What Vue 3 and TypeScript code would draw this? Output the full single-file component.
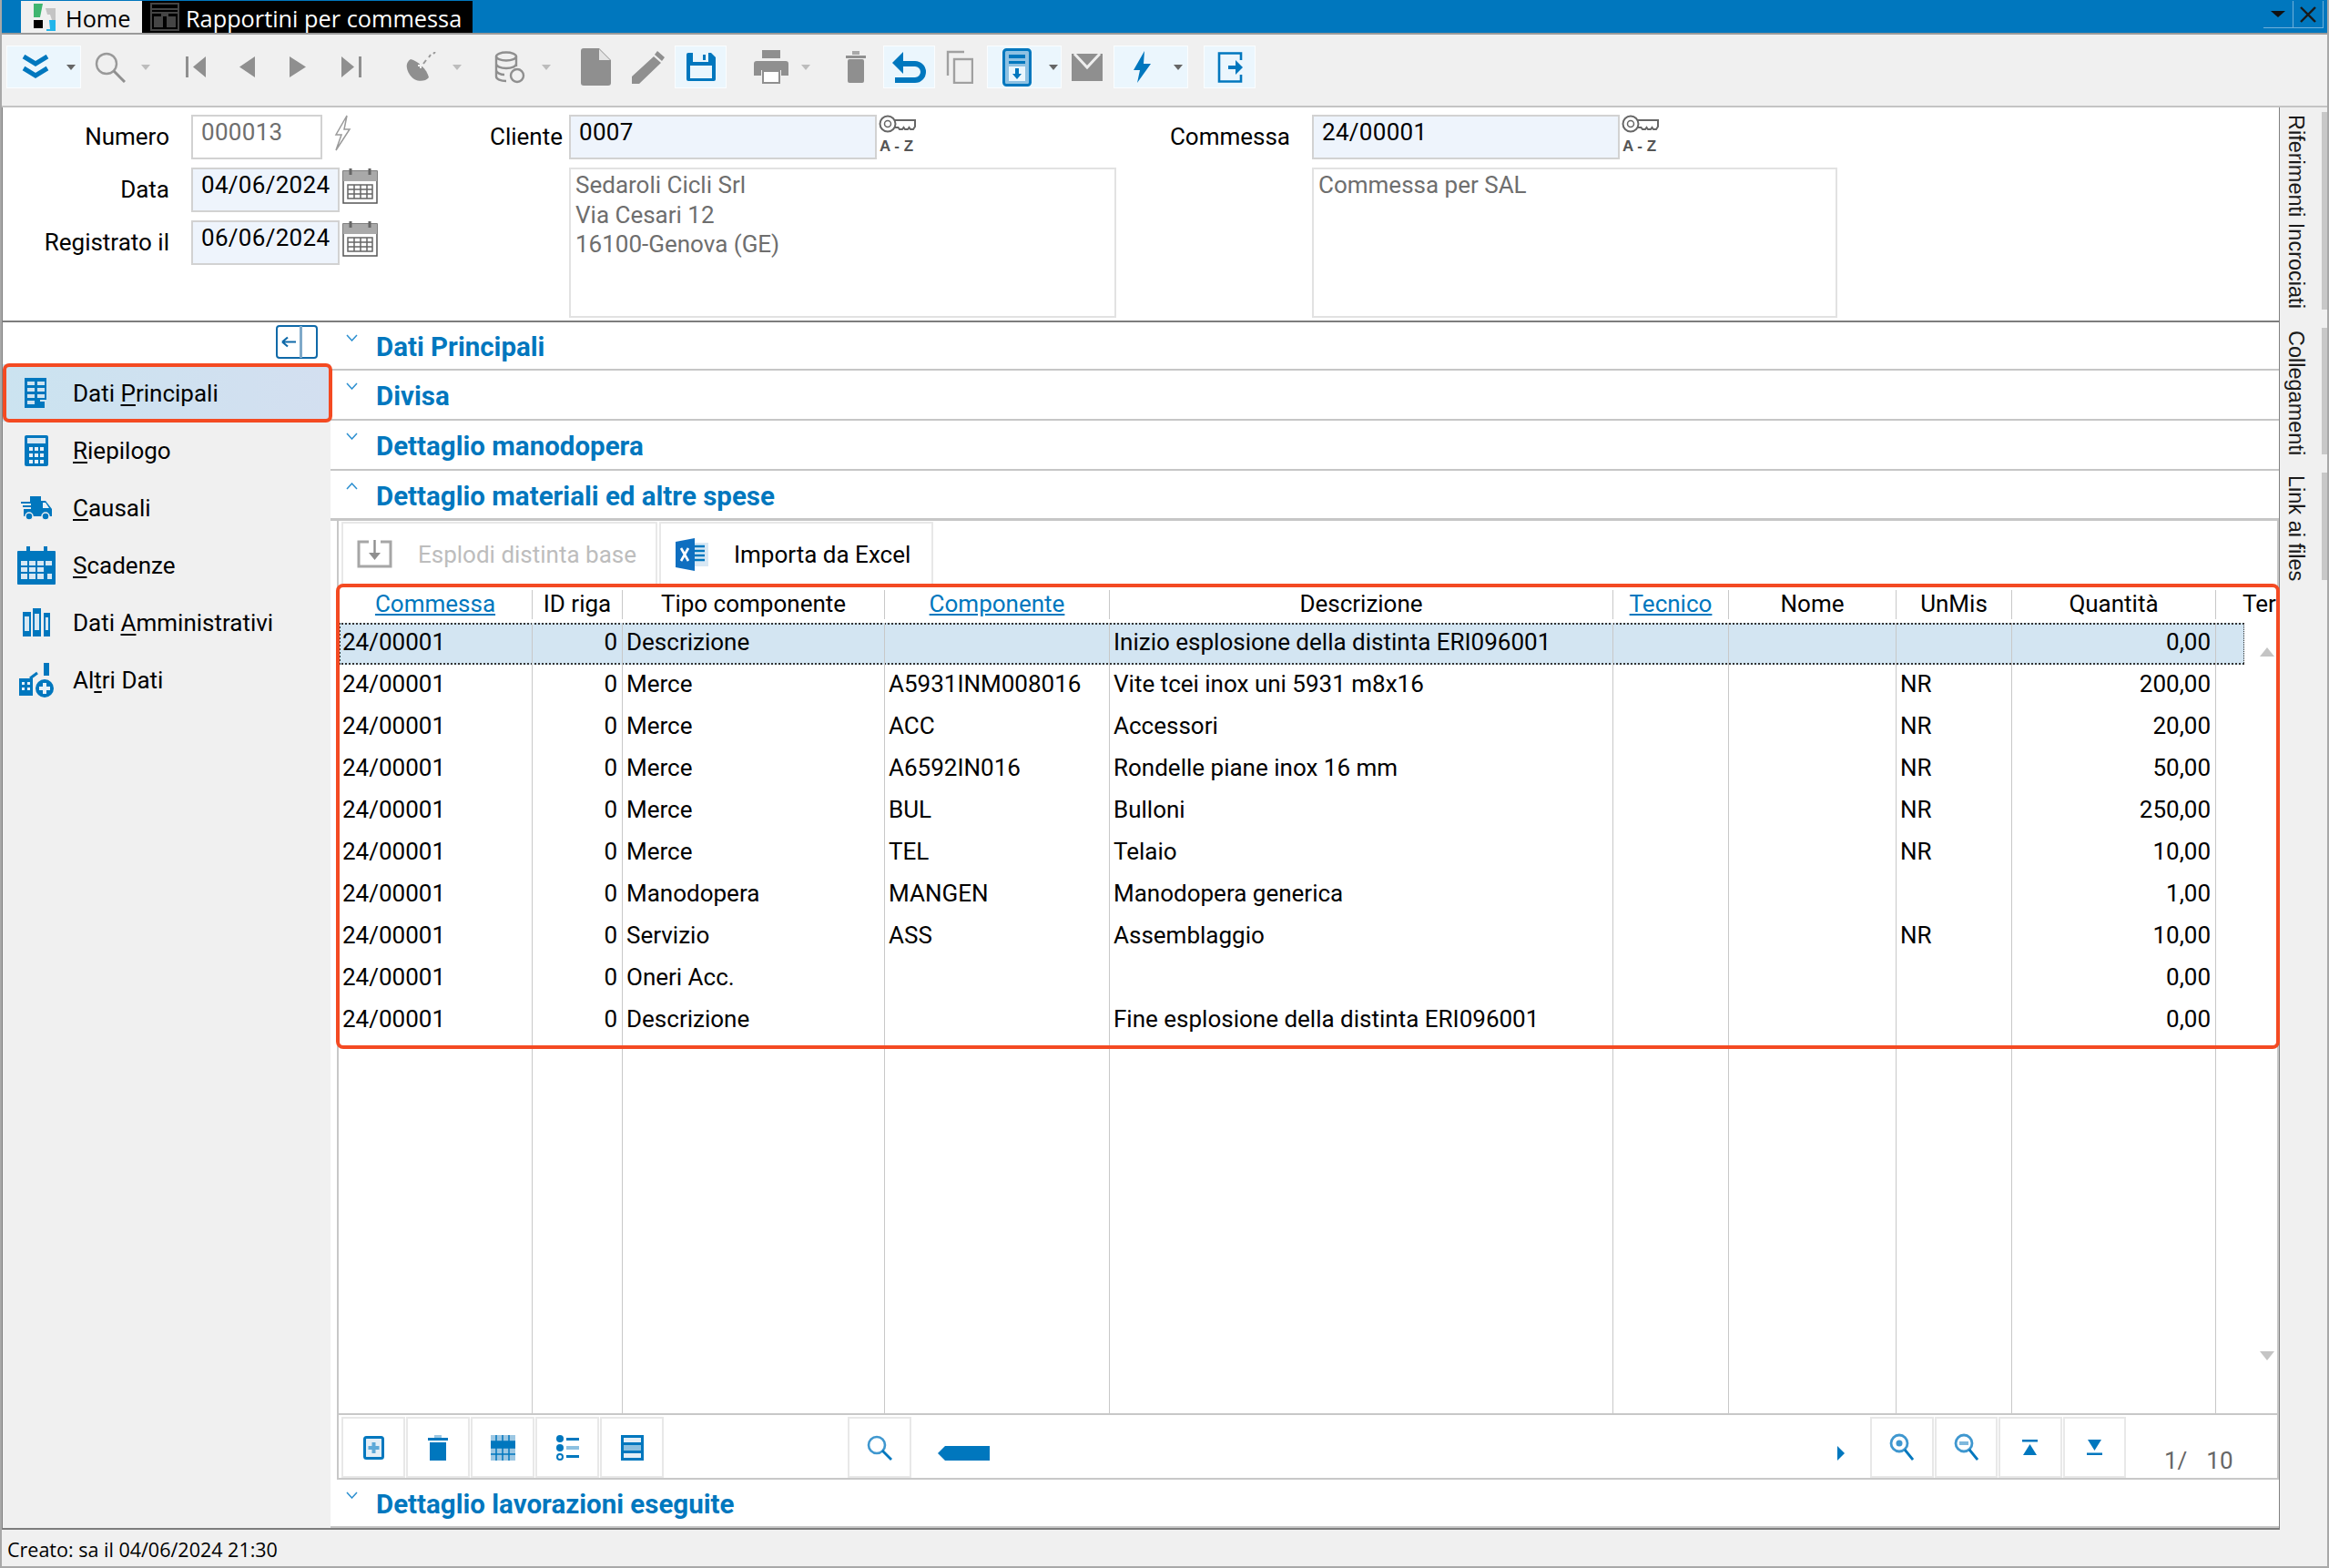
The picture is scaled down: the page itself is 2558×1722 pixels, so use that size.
<script setup lang="ts">
interface GridRow {
  commessa: string
  tipo: string
  comp: string
  desc: string
  um: string
  qty: string
}

const rows: GridRow[] = [
  { commessa: '24/00001', tipo: 'Descrizione', comp: '', desc: 'Inizio esplosione della distinta ERI096001', um: '', qty: '0,00' },
  { commessa: '24/00001', tipo: 'Merce', comp: 'A5931INM008016', desc: 'Vite tcei inox uni 5931 m8x16', um: 'NR', qty: '200,00' },
  { commessa: '24/00001', tipo: 'Merce', comp: 'ACC', desc: 'Accessori', um: 'NR', qty: '20,00' },
  { commessa: '24/00001', tipo: 'Merce', comp: 'A6592IN016', desc: 'Rondelle piane inox 16 mm', um: 'NR', qty: '50,00' },
  { commessa: '24/00001', tipo: 'Merce', comp: 'BUL', desc: 'Bulloni', um: 'NR', qty: '250,00' },
  { commessa: '24/00001', tipo: 'Merce', comp: 'TEL', desc: 'Telaio', um: 'NR', qty: '10,00' },
  { commessa: '24/00001', tipo: 'Manodopera', comp: 'MANGEN', desc: 'Manodopera generica', um: '', qty: '1,00' },
  { commessa: '24/00001', tipo: 'Servizio', comp: 'ASS', desc: 'Assemblaggio', um: 'NR', qty: '10,00' },
  { commessa: '24/00001', tipo: 'Oneri Acc.', comp: '', desc: '', um: '', qty: '0,00' },
  { commessa: '24/00001', tipo: 'Descrizione', comp: '', desc: 'Fine esplosione della distinta ERI096001', um: '', qty: '0,00' }
]

const collapsed = ['Dati Principali', 'Divisa', 'Dettaglio manodopera']
</script>

<template>
  <div class="app">
    <!-- Title bar with the document tabs -->
    <div class="titlebar">
      <div class="tab tab-home">
        <svg width="26" height="31" viewBox="0 0 26 31">
          <path d="M1 1h10l-3 15H1z" fill="#3fb56f" />
          <path d="M14 6h11v13h-4l-2-6h-3z" fill="#c4c4c4" />
          <rect x="1" y="19" width="10" height="9" fill="#000" />
          <path d="M18 19l3 0h4v12H15v-2h4z" fill="#22b5ea" />
        </svg>
        <span>Home</span>
      </div>
      <div class="tab tab-doc">
        <svg width="32" height="31" viewBox="0 0 32 31">
          <rect x="1" y="1" width="30" height="29" fill="none" stroke="#454545" stroke-width="2" />
          <path d="M1 7h30M1 11h30" stroke="#454545" stroke-width="2" />
          <rect x="4" y="15" width="10" height="12" fill="#454545" />
          <rect x="18" y="15" width="10" height="12" fill="#454545" />
          <rect x="12" y="12" width="8" height="3" fill="#454545" />
        </svg>
        <span>Rapportini per commessa</span>
      </div>
      <div class="winbtns">
        <div class="winbtn"><i class="win-caret"></i></div>
        <div class="winbtn">
          <svg width="20" height="18" viewBox="0 0 20 18"><path d="M2 1l16 16M18 1L2 17" stroke="#1a1a1a" stroke-width="2.4" /></svg>
        </div>
      </div>
    </div>

    <!-- Main toolbar -->
    <div class="toolbar">
      <div class="tbtn tbtn-wide">
        <svg width="30" height="27" viewBox="0 0 30 27"><path d="M2 2l13 8 13-8M2 15l13 8 13-8" fill="none" stroke="#0077be" stroke-width="5" /></svg>
        <i class="caret dark ml-19"></i>
      </div>
      <svg class="ml-15" width="34" height="34" viewBox="0 0 34 34"><circle cx="13" cy="13" r="11" fill="none" stroke="#999" stroke-width="2.4" /><path d="M21 21l12 12" stroke="#8f8f8f" stroke-width="3" /></svg>
      <i class="caret ml-17"></i>
      <svg class="ml-39" width="22" height="23" viewBox="0 0 22 23"><path d="M0 0h3v23H0zM22 0v23L8 11.5z" fill="#8f8f8f" /></svg>
      <svg class="ml-37" width="17" height="23" viewBox="0 0 17 23"><path d="M17 0v23L0 11.5z" fill="#8f8f8f" /></svg>
      <svg class="ml-38" width="18" height="23" viewBox="0 0 18 23"><path d="M0 0v23l18-11.5z" fill="#8f8f8f" /></svg>
      <svg class="ml-39" width="22" height="23" viewBox="0 0 22 23"><path d="M19 0h3v23h-3zM0 0v23l14-11.5z" fill="#8f8f8f" /></svg>
      <svg class="ml-49" width="34" height="34" viewBox="0 0 34 34">
        <path d="M5 8c8 2 18 11 20 20-5 6-16 5-21-3S0 11 5 8z" fill="#8f8f8f" />
        <path d="M13 15h6M16 12v6" stroke="#f0f0f0" stroke-width="2" />
        <path d="M19 13l3-4M25 6l2-3M30 2l2-2" stroke="#999" stroke-width="2" />
      </svg>
      <i class="caret ml-17"></i>
      <svg class="ml-36" width="35" height="36" viewBox="0 0 35 36">
        <g fill="none" stroke="#8f8f8f" stroke-width="2.4">
          <ellipse cx="13" cy="6" rx="11" ry="4.5" />
          <path d="M2 6v22c0 3 5 5 11 5M24 6v11M2 14c0 3 5 5 11 5s11-2 11-5M2 21c0 3 5 5 9 5" />
          <circle cx="25" cy="27" r="7" />
        </g>
      </svg>
      <i class="caret ml-17"></i>
      <svg class="ml-33" width="33" height="41" viewBox="0 0 33 41"><path d="M3 0h17l13 13v25a3 3 0 0 1-3 3H3a3 3 0 0 1-3-3V3a3 3 0 0 1 3-3z" fill="#8f8f8f" /><path d="M20 1v12h12z" fill="#e4e4e4" /></svg>
      <svg class="ml-23" width="36" height="36" viewBox="0 0 36 36"><path d="M28 0l8 7-3 4-8-7zM24 6l8 7L8 36H0v-8z" fill="#8f8f8f" /></svg>
      <div class="tbtn tbtn-sq ml-11">
        <svg width="32" height="31" viewBox="0 0 32 31"><path d="M2 0h25l5 5v24a2 2 0 0 1-2 2H2a2 2 0 0 1-2-2V2a2 2 0 0 1 2-2z" fill="#0077be" /><rect x="4" y="14" width="24" height="14" fill="#eaf6fd" /><rect x="7" y="0" width="17" height="10" fill="#eaf6fd" /><rect x="18" y="2" width="3" height="6" fill="#0077be" /></svg>
      </div>
      <svg class="ml-30" width="38" height="37" viewBox="0 0 38 37"><rect x="9" y="0" width="20" height="9" fill="#8f8f8f" /><path d="M3 12h32a3 3 0 0 1 3 3v13H30v-6H8v6H0V15a3 3 0 0 1 3-3z" fill="#8f8f8f" /><rect x="10" y="23" width="18" height="13" fill="#fff" stroke="#8f8f8f" stroke-width="2" /></svg>
      <i class="caret ml-14"></i>
      <svg class="ml-39" width="22" height="35" viewBox="0 0 22 35"><rect x="0" y="5" width="22" height="3" fill="#8f8f8f" /><rect x="7" y="0" width="8" height="4" fill="#a8a8a8" /><rect x="2" y="9" width="18" height="26" rx="2" fill="#8f8f8f" /></svg>
      <div class="tbtn tbtn-sq ml-19">
        <svg width="37" height="34" viewBox="0 0 37 34"><path d="M6 13h19a9 9 0 0 1 0 18H3" fill="none" stroke="#0077be" stroke-width="6" /><path d="M12 0v24L0 12z" fill="#0077be" /></svg>
      </div>
      <svg class="ml-12" width="30" height="37" viewBox="0 0 30 37"><g fill="none" stroke="#a0a0a0" stroke-width="2.4"><path d="M20 2H2v26" /><rect x="9" y="10" width="20" height="26" /></g></svg>
      <div class="tbtn tbtn-wide ml-15">
        <svg width="32" height="42" viewBox="0 0 32 42"><rect x="1.500" y="1.500" width="29" height="39" rx="3" fill="#8fc1e2" stroke="#0077be" stroke-width="3" /><path d="M7 7h18v4H7zM7 14h18v3H7z" fill="#0077be" /><rect x="7" y="20" width="18" height="16" fill="#eaf6fd" /><path d="M14 22h4v6h3l-5 6-5-6h3z" fill="#0077be" /></svg>
        <i class="caret dark ml-19"></i>
      </div>
      <svg class="ml-11" width="34" height="30" viewBox="0 0 34 30"><rect width="34" height="30" fill="#8f8f8f" /><path d="M3 0l14 15L31 0" fill="none" stroke="#eee" stroke-width="3" /></svg>
      <div class="tbtn tbtn-wide tbtn-bolt ml-12">
        <svg width="20" height="35" viewBox="0 0 20 35"><path d="M13 0L1 21h7L5 35l15-21h-8z" fill="#0077be" /></svg>
        <i class="caret dark ml-25"></i>
      </div>
      <div class="tbtn tbtn-sq ml-17">
        <svg width="28" height="34" viewBox="0 0 28 34"><path d="M26 9V1.500H2v31h24V25" fill="none" stroke="#0077be" stroke-width="2.600" /><path d="M12 15h8v-6l8 8-8 8v-6h-8z" fill="#0077be" /></svg>
      </div>
    </div>

    <div class="body">
      <div class="content">
        <!-- Document header -->
        <div class="head">
          <div class="group g1">
            <div class="frow">
              <label>Numero</label>
              <div class="field readonly f-num">000013</div>
              <svg class="bolt-out" width="19" height="40" viewBox="0 0 19 40"><path d="M14 1L2 22h6L2 39l15-23h-6z" fill="none" stroke="#9a9a9a" stroke-width="1.500" /></svg>
            </div>
            <div class="frow">
              <label>Data</label>
              <div class="field f-date">04/06/2024</div>
              <svg class="cal" width="39" height="40" viewBox="0 0 39 40">
                <rect x="1" y="4" width="37" height="35" fill="#fff" stroke="#555" stroke-width="1.500" />
                <rect x="1" y="4" width="37" height="11" fill="#a9a9a9" />
                <path d="M9 1v7M30 1v7" stroke="#666" stroke-width="3" />
                <path d="M6 19h27v15H6zM6 24h27M6 29h27M13 19v15M20 19v15M27 19v15" fill="none" stroke="#666" stroke-width="1.500" />
              </svg>
            </div>
            <div class="frow">
              <label>Registrato il</label>
              <div class="field f-date">06/06/2024</div>
              <svg class="cal" width="39" height="40" viewBox="0 0 39 40">
                <rect x="1" y="4" width="37" height="35" fill="#fff" stroke="#555" stroke-width="1.500" />
                <rect x="1" y="4" width="37" height="11" fill="#a9a9a9" />
                <path d="M9 1v7M30 1v7" stroke="#666" stroke-width="3" />
                <path d="M6 19h27v15H6zM6 24h27M6 29h27M13 19v15M20 19v15M27 19v15" fill="none" stroke="#666" stroke-width="1.500" />
              </svg>
            </div>
          </div>

          <div class="group g2">
            <div class="frow">
              <label class="l-cli">Cliente</label>
              <div class="field f-cli">0007</div>
              <svg class="key" width="42" height="46" viewBox="0 0 42 46">
                <circle cx="10" cy="10" r="8.500" fill="none" stroke="#666" stroke-width="2" />
                <circle cx="10" cy="10" r="3.500" fill="none" stroke="#666" stroke-width="1.500" />
                <path d="M18 6h22v7l-2 3h-3l-1.500-2-1.500 2h-3l-1.500-2-1.500 2h-3l-1.500-2H18" fill="none" stroke="#666" stroke-width="2" />
                <text x="1" y="40" class="az">A - Z</text>
              </svg>
            </div>
            <div class="note n-cli">Sedaroli Cicli Srl<br />Via Cesari 12<br />16100-Genova (GE)</div>
          </div>

          <div class="group g3">
            <div class="frow">
              <label class="l-com">Commessa</label>
              <div class="field f-com">24/00001</div>
              <svg class="key" width="42" height="46" viewBox="0 0 42 46">
                <circle cx="10" cy="10" r="8.500" fill="none" stroke="#666" stroke-width="2" />
                <circle cx="10" cy="10" r="3.500" fill="none" stroke="#666" stroke-width="1.500" />
                <path d="M18 6h22v7l-2 3h-3l-1.500-2-1.500 2h-3l-1.500-2-1.500 2h-3l-1.500-2H18" fill="none" stroke="#666" stroke-width="2" />
                <text x="1" y="40" class="az">A - Z</text>
              </svg>
            </div>
            <div class="note n-com">Commessa per SAL</div>
          </div>
        </div>

        <div class="main">
          <!-- Left navigation -->
          <div class="sidebar">
            <div class="side-top">
              <svg width="46" height="37" viewBox="0 0 46 37">
                <rect x="1" y="1" width="44" height="35" rx="3" fill="#fff" stroke="#0f69a8" stroke-width="2" />
                <rect x="26" y="1" width="3" height="35" fill="#7fa9c9" />
                <path d="M7 18.500h15M7 18.500l6-5M7 18.500l6 5" fill="none" stroke="#0f69a8" stroke-width="2.200" />
              </svg>
            </div>
            <div class="nav active">
              <span class="nav-ico">
                <svg width="26" height="34" viewBox="0 0 26 34"><rect width="24" height="33" fill="#0077be" /><path d="M3 4h8v4H3zM14 4h8v4h-8zM3 11h8v4H3zM14 11h8v4h-8zM3 18h8v4H3zM14 18h8v4h-8zM3 25h8v4H3z" fill="#cfe3f0" /><path d="M17 26h5v8h2v-10h-7z" fill="#cfe3f0" /></svg>
              </span>
              <span class="nav-txt">Dati <u>P</u>rincipali</span>
            </div>
            <div class="nav">
              <span class="nav-ico">
                <svg width="26" height="34" viewBox="0 0 26 34"><rect width="26" height="34" rx="2" fill="#0077be" /><rect x="3" y="3" width="20" height="6" fill="#d8e8f3" /><path d="M5 13h4v4H5zM11 13h4v4h-4zM17 13h4v4h-4zM5 20h4v4H5zM11 20h4v4h-4zM17 20h4v4h-4zM5 27h4v4H5zM11 27h4v4h-4zM17 27h4v4h-4z" fill="#e8f1f8" /></svg>
              </span>
              <span class="nav-txt"><u>R</u>iepilogo</span>
            </div>
            <div class="nav">
              <span class="nav-ico">
                <svg width="34" height="28" viewBox="0 0 34 28"><path d="M10 1h12v5h5l7 9v8H3v-8h8v-2H2v-2h9V9H0V7h10z" fill="#0077be" /><path d="M24 8h3l4 6h-7z" fill="#e8f1f8" /><circle cx="9" cy="23" r="4" fill="#0077be" stroke="#f0f0f0" stroke-width="1.500" /><circle cx="27" cy="23" r="4" fill="#0077be" stroke="#f0f0f0" stroke-width="1.500" /></svg>
              </span>
              <span class="nav-txt"><u>C</u>ausali</span>
            </div>
            <div class="nav">
              <span class="nav-ico">
                <svg width="42" height="42" viewBox="0 0 42 42"><rect x="0" y="5" width="42" height="37" rx="1" fill="#0077be" /><rect x="10" y="0" width="4" height="9" fill="#0077be" /><rect x="29" y="0" width="4" height="9" fill="#0077be" /><path d="M4 16h7v5H4zM13 16h7v5h-7zM22 16h7v5h-7zM31 16h7v5h-7zM4 23h7v5H4zM13 23h7v5h-7zM22 23h7v5h-7zM4 30h7v6H4zM13 30h7v6h-7zM22 30h7v6h-7zM33 30h5v6h-5z" fill="#d8e8f3" /></svg>
              </span>
              <span class="nav-txt"><u>S</u>cadenze</span>
            </div>
            <div class="nav">
              <span class="nav-ico">
                <svg width="32" height="32" viewBox="0 0 32 32"><rect x="1" y="4" width="9" height="27" fill="#0077be" /><rect x="12" y="0" width="9" height="31" fill="#0077be" /><rect x="24" y="5" width="7" height="26" fill="#0077be" /><path d="M3 9h5v16H3zM14 6h5v18h-5zM26 10h3v14h-3z" fill="#d8e8f3" /></svg>
              </span>
              <span class="nav-txt">Dati <u>A</u>mministrativi</span>
            </div>
            <div class="nav">
              <span class="nav-ico">
                <svg width="38" height="38" viewBox="0 0 38 38"><rect x="27" y="0" width="6" height="14" fill="#0077be" /><circle cx="28" cy="28" r="10" fill="#0077be" /><path d="M26 22h4v4h4v4h-4v4h-4v-4h-4v-4h4z" fill="#e8f1f8" /><path d="M0 17h15v19H0z" fill="#0077be" /><path d="M3 21h3v3H3zM9 21h3v3H9zM3 27h3v3H3zM9 27h3v3H9z" fill="#e8f1f8" /><path d="M12 17l8-6" stroke="#0077be" stroke-width="3" /></svg>
              </span>
              <span class="nav-txt">Al<u>t</u>ri Dati</span>
            </div>
          </div>

          <!-- Accordion sections -->
          <div class="acc">
            <div v-for="title in collapsed" :key="title" class="sec">
              <svg class="chev" width="13" height="8" viewBox="0 0 13 8"><path d="M1 1l5.500 6L12 1" fill="none" stroke="#2b8fd0" stroke-width="1.500" /></svg>
              <span>{{ title }}</span>
            </div>
            <div class="sec sec-open">
              <svg class="chev" width="13" height="8" viewBox="0 0 13 8"><path d="M1 7l5.500-6L12 7" fill="none" stroke="#2b8fd0" stroke-width="1.500" /></svg>
              <span>Dettaglio materiali ed altre spese</span>
            </div>

            <div class="panel">
              <div class="subbar">
                <div class="subbtn off">
                  <svg width="39" height="31" viewBox="0 0 39 31"><path d="M13 2H2v27h35V2H26" fill="none" stroke="#a6a6a6" stroke-width="3" /><path d="M19.500 0v18" stroke="#8f8f8f" stroke-width="2.400" /><path d="M13 14h13l-6.500 8z" fill="#8f8f8f" /></svg>
                  <span>Esplodi distinta base</span>
                </div>
                <div class="subbtn btn-xl">
                  <svg width="36" height="36" viewBox="0 0 36 36"><rect x="14" y="5" width="22" height="26" fill="#d9e8f4" /><path d="M20 9h12M20 14h12M20 19h12M20 24h12" stroke="#0077be" stroke-width="2.500" /><path d="M0 4l21-4v36L0 32z" fill="#0f6fc0" /><path d="M6 11l8 14M14 11L6 25" stroke="#fff" stroke-width="2.600" /></svg>
                  <span>Importa da Excel</span>
                </div>
              </div>

              <div class="tablewrap">
                <div class="thead gridcols">
                  <div class="th"><a>Commessa</a></div>
                  <div class="th">ID riga</div>
                  <div class="th">Tipo componente</div>
                  <div class="th"><a>Componente</a></div>
                  <div class="th">Descrizione</div>
                  <div class="th"><a>Tecnico</a></div>
                  <div class="th">Nome</div>
                  <div class="th">UnMis</div>
                  <div class="th">Quantità</div>
                  <div class="th th-last">Ter</div>
                </div>
                <div
                  v-for="(row, index) in rows"
                  :key="index"
                  class="row gridcols"
                  :class="{ selected: index === 0 }"
                >
                  <div class="td">{{ row.commessa }}</div>
                  <div class="td num">0</div>
                  <div class="td">{{ row.tipo }}</div>
                  <div class="td">{{ row.comp }}</div>
                  <div class="td">{{ row.desc }}</div>
                  <div class="td"></div>
                  <div class="td"></div>
                  <div class="td">{{ row.um }}</div>
                  <div class="td num">{{ row.qty }}</div>
                  <div class="td last"></div>
                </div>
                <div class="filler gridcols">
                  <div v-for="n in 10" :key="n" class="td" :class="{ last: n === 10 }"></div>
                </div>
                <i class="scroll-up"></i>
                <i class="scroll-down"></i>
                <div class="annot"></div>
              </div>

              <div class="gridbar">
                <div class="gbtn">
                  <svg width="23" height="26" viewBox="0 0 23 26"><rect x="1.500" y="1.500" width="20" height="23" rx="2" fill="#e4eef6" stroke="#0077be" stroke-width="3" /><path d="M9.500 7h4v4h4v4h-4v4h-4v-4h-4v-4h4z" fill="#5ea9d8" /></svg>
                </div>
                <div class="gbtn">
                  <svg width="22" height="28" viewBox="0 0 22 28"><rect x="0" y="3" width="22" height="3" fill="#0077be" /><rect x="7" y="0" width="8" height="3" fill="#9cc7e3" /><rect x="2" y="8" width="18" height="20" fill="#0077be" /></svg>
                </div>
                <div class="gbtn">
                  <svg width="27" height="28" viewBox="0 0 27 28"><rect width="27" height="28" fill="#9cc7e3" /><rect y="7" width="27" height="7" fill="#0077be" /><path d="M6 0v28M13 0v28M20 0v28M0 7h27M0 14h27M0 21h27" stroke="#0077be" stroke-width="1.500" /></svg>
                </div>
                <div class="gbtn">
                  <svg width="25" height="28" viewBox="0 0 25 28"><circle cx="4" cy="4" r="4" fill="#0077be" /><circle cx="4" cy="14" r="4" fill="#0077be" /><circle cx="4" cy="24" r="3" fill="#fff" stroke="#0077be" stroke-width="2" /><path d="M11 3h14v3H11zM11 22h14v3H11z" fill="#0077be" /><path d="M11 12h14v4H11z" fill="#8cc0e0" /></svg>
                </div>
                <div class="gbtn">
                  <svg width="25" height="28" viewBox="0 0 25 28"><rect width="25" height="28" fill="#0077be" /><rect x="3" y="3" width="19" height="5" fill="#e4eef6" /><rect x="3" y="11" width="19" height="6" fill="#8cc0e0" /><rect x="3" y="20" width="19" height="5" fill="#e4eef6" /></svg>
                </div>
                <div class="gbtn ml-201">
                  <svg width="28" height="28" viewBox="0 0 28 28"><circle cx="11" cy="11" r="9" fill="none" stroke="#3f97cf" stroke-width="2.600" /><path d="M17 17l10 10" stroke="#0077be" stroke-width="2.800" /></svg>
                </div>
                <div class="hscroll">
                  <i class="arrow-l"></i>
                  <i class="thumb"></i>
                  <i class="arrow-r"></i>
                </div>
                <div class="gbtn gbtn-w ml-27">
                  <svg width="27" height="32" viewBox="0 0 27 32"><circle cx="11" cy="11" r="9" fill="none" stroke="#3f97cf" stroke-width="2.800" /><circle cx="11" cy="11" r="3.500" fill="#3f97cf" /><path d="M17 18l9 11" stroke="#0077be" stroke-width="2.800" /></svg>
                </div>
                <div class="gbtn gbtn-w">
                  <svg width="27" height="32" viewBox="0 0 27 32"><circle cx="11" cy="11" r="9" fill="none" stroke="#3f97cf" stroke-width="2.800" /><rect x="6" y="9" width="10" height="4" fill="#7fb8dc" /><path d="M17 18l9 11" stroke="#0077be" stroke-width="2.800" /></svg>
                </div>
                <div class="gbtn gbtn-w">
                  <svg width="17" height="17" viewBox="0 0 17 17"><rect width="17" height="2.500" fill="#0077be" /><path d="M8.500 5L16 17H1z" fill="#0077be" /></svg>
                </div>
                <div class="gbtn gbtn-w">
                  <svg width="17" height="17" viewBox="0 0 17 17"><path d="M8.500 12L16 0H1z" fill="#0077be" /><rect y="14.500" width="17" height="2.500" fill="#0077be" /></svg>
                </div>
                <div class="pager"><span>1/</span><span>10</span></div>
              </div>
            </div>

            <div class="sec sec-last">
              <svg class="chev" width="13" height="8" viewBox="0 0 13 8"><path d="M1 1l5.500 6L12 1" fill="none" stroke="#2b8fd0" stroke-width="1.500" /></svg>
              <span>Dettaglio lavorazioni eseguite</span>
            </div>
          </div>
        </div>
      </div>

      <!-- Right vertical tabs -->
      <div class="rail">
        <div class="rail-tab r1">Riferimenti Incrociati</div>
        <div class="rail-tab r2">Collegamenti</div>
        <div class="rail-tab r3">Link ai files</div>
      </div>
    </div>

    <div class="status">Creato: sa il 04/06/2024 21:30</div>
  </div>
</template>

<style>
html,
body {
  margin: 0;
  padding: 0;
}
</style>

<style scoped>
.app {
  box-sizing: border-box;
  width: 2558px;
  height: 1722px;
  display: flex;
  flex-direction: column;
  overflow: hidden;
  background: #f0f0f0;
  border: 2px solid #a8a8a8;
  border-top: 0;
  font-family: Roboto, "Liberation Sans", sans-serif;
  font-size: 26px;
  color: #000;
}

.titlebar {
  flex: none;
  box-sizing: border-box;
  height: 38px;
  display: flex;
  padding: 1px 4px 0 21px;
  background: #0077be;
  border-bottom: 2px solid #9a9a9a;
  font-family: "Open Sans", sans-serif;
  font-size: 25.300px;
}

.tab {
  display: flex;
  align-items: center;
  height: 35px;
}

.tab span {
  padding-top: 2px;
}

.tab-home {
  width: 133px;
  box-sizing: border-box;
  padding-left: 13px;
  gap: 10px;
  background: #f0f0f0;
}

.tab-doc {
  width: 363px;
  box-sizing: border-box;
  padding-left: 9px;
  gap: 7px;
  background: #000;
  color: #fff;
}

.winbtns {
  display: flex;
  margin-left: auto;
}

.winbtn {
  width: 32px;
  height: 29px;
  display: flex;
  align-items: center;
  justify-content: center;
  border-right: 1px solid #6fb0da;
  border-bottom: 1px solid #6fb0da;
}

.win-caret {
  border: 8px solid transparent;
  border-top: 7px solid #111;
  border-bottom: 0;
}

.toolbar {
  flex: none;
  box-sizing: border-box;
  height: 80px;
  display: flex;
  align-items: center;
  padding: 0 0 7px 5px;
  border-bottom: 2px solid #c4c4c4;
}

.toolbar svg {
  flex: none;
}

.tbtn {
  box-sizing: border-box;
  height: 47px;
  display: flex;
  align-items: center;
  background: #ebf6fd;
  border: 1px solid #fafdff;
  flex: none;
}

.tbtn-wide {
  width: 82px;
  padding-left: 16px;
}

.tbtn-bolt {
  padding-left: 20px;
}

.tbtn-sq {
  width: 57px;
  justify-content: center;
}

.caret {
  flex: none;
  border: 5px solid transparent;
  border-top: 6px solid #bcbcbc;
  border-bottom: 0;
}

.caret.dark {
  border-top-color: #666;
}

.ml-11 { margin-left: 11px; }
.ml-12 { margin-left: 12px; }
.ml-14 { margin-left: 14px; }
.ml-15 { margin-left: 15px; }
.ml-17 { margin-left: 17px; }
.ml-19 { margin-left: 19px; }
.ml-23 { margin-left: 23px; }
.ml-25 { margin-left: 25px; }
.ml-27 { margin-left: 27px; }
.ml-30 { margin-left: 30px; }
.ml-33 { margin-left: 33px; }
.ml-36 { margin-left: 36px; }
.ml-37 { margin-left: 37px; }
.ml-38 { margin-left: 38px; }
.ml-39 { margin-left: 39px; }
.ml-49 { margin-left: 49px; }
.ml-201 { margin-left: 201px; }

.body {
  flex: 1;
  min-height: 0;
  display: flex;
}

.content {
  flex: none;
  box-sizing: border-box;
  width: 2502px;
  display: flex;
  flex-direction: column;
  border-left: 1px solid #808080;
  border-right: 1px solid #808080;
  background: #fff;
}

.head {
  flex: none;
  box-sizing: border-box;
  height: 236px;
  display: flex;
  padding-top: 8px;
  border-bottom: 2px solid #7d7d7d;
  font-size: 26px;
}

.group {
  flex: none;
}

.g1 {
  width: 438px;
}

.g2 {
  width: 797px;
}

.frow {
  display: flex;
  align-items: flex-start;
  height: 49px;
  margin-bottom: 9px;
}

.frow label {
  flex: none;
  width: 183px;
  margin-right: 24px;
  text-align: right;
  line-height: 49px;
}

.frow .l-cli {
  width: 177px;
  margin-right: 7px;
}

.frow .l-com {
  width: 179px;
  margin-right: 24px;
}

.field {
  flex: none;
  box-sizing: border-box;
  height: 49px;
  padding-left: 9px;
  line-height: 34px;
  letter-spacing: 0.3px;
  background: #eef4fc;
  border: 2px solid #d2d2d2;
}

.field.readonly {
  background: #fff;
  color: #6e6e6e;
}

.f-num { width: 144px; }
.f-date { width: 163px; }
.f-cli { width: 338px; }
.f-com { width: 338px; }

.bolt-out {
  margin-left: 13px;
}

.cal {
  margin-left: 3px;
}

.key {
  margin-left: 2px;
}

.az {
  font-family: "Liberation Sans", sans-serif;
  font-size: 17px;
  font-weight: 700;
  fill: #555;
}

.note {
  box-sizing: border-box;
  height: 165px;
  padding: 1px 5px;
  line-height: 32.5px;
  color: #6e6e6e;
  border: 2px solid #e2e2e2;
}

.n-cli {
  margin-left: 184px;
  width: 601px;
}

.n-com {
  margin-left: 203px;
  width: 577px;
}

.main {
  flex: 1;
  min-height: 0;
  display: flex;
  border-bottom: 2px solid #7d7d7d;
}

.sidebar {
  flex: none;
  width: 360px;
  background: #f0f0f0;
}

.side-top {
  height: 46px;
  display: flex;
  justify-content: flex-end;
  align-items: flex-start;
  padding: 3px 14px 0 0;
  box-sizing: border-box;
  background: #fff;
}

.nav {
  position: relative;
  height: 63px;
  display: flex;
  align-items: center;
  padding-left: 16px;
}

.nav.active {
  background: linear-gradient(90deg, #cbe3f0, #d3dff0);
}

/* red annotation frame around the active entry */
.nav.active::after {
  content: "";
  position: absolute;
  inset: -1px -2px -1px 0;
  border: 4px solid #f44a22;
  border-radius: 7px;
}

.nav-ico {
  flex: none;
  width: 42px;
  display: flex;
  justify-content: center;
}

.nav-txt {
  margin-left: 19px;
  line-height: 32px;
}

.nav-txt u {
  text-underline-offset: 3px;
}

.acc {
  flex: 1;
  min-width: 0;
  display: flex;
  flex-direction: column;
}

.sec {
  flex: none;
  box-sizing: border-box;
  height: 55px;
  display: flex;
  padding-left: 17px;
  border-bottom: 2px solid #c6c6c6;
  font-size: 29.500px;
  font-weight: 700;
  line-height: 56px;
  color: #0077be;
}

.sec:first-child {
  height: 53px;
  line-height: 54px;
}

.sec-open {
  border-bottom-width: 3px;
}

.sec-last {
  height: 53px;
  line-height: 55px;
}

.chev {
  flex: none;
  margin: 13px 20px 0 0;
}

.panel {
  flex: 1;
  min-height: 0;
  display: flex;
  flex-direction: column;
  margin-left: 7px;
  border: 2px solid #c8c8c8;
  border-top: 0;
}

.subbar {
  flex: none;
  height: 70px;
  box-sizing: border-box;
  display: flex;
  gap: 2px;
  padding: 1px 0 0 3px;
}

.subbtn {
  box-sizing: border-box;
  height: 69px;
  display: flex;
  align-items: center;
  gap: 28px;
  padding-left: 15px;
  border: 2px solid #e8e8e8;
  border-bottom: 0;
}

.subbtn.off {
  width: 347px;
  color: #bdbdbd;
}

.btn-xl {
  width: 301px;
  padding-left: 16px;
}

.tablewrap {
  position: relative;
  flex: 1;
  min-height: 0;
  display: flex;
  flex-direction: column;
}

.gridcols {
  display: grid;
  grid-template-columns: 213px 99px 288px 247px 553px 127px 184px 127px 224px 66px;
}

.thead {
  flex: none;
  box-sizing: border-box;
  height: 42px;
  padding-top: 6px;
}

.th {
  height: 32px;
  box-sizing: border-box;
  line-height: 30px;
  text-align: center;
  border-right: 1px solid #c8c8c8;
  white-space: nowrap;
}

.th a {
  color: #0077be;
  text-decoration: underline;
}

.th-last {
  padding-left: 29px;
  text-align: left;
  border-right: 0;
}

.row {
  position: relative;
  flex: none;
  height: 46px;
}

.row.selected::before {
  content: "";
  position: absolute;
  left: 0;
  top: 0;
  box-sizing: border-box;
  width: 2093px;
  height: 46px;
  background: #d3e5f2;
  border: 2px dotted #333;
  border-right-width: 1px;
}

.td {
  position: relative;
  box-sizing: border-box;
  padding: 0 4px;
  line-height: 43px;
  border-right: 1px solid #c8c8c8;
  white-space: nowrap;
}

.td.num {
  text-align: right;
  padding-right: 5px;
}

.td.last {
  border-right: 0;
}

.filler {
  flex: 1;
}

.scroll-up,
.scroll-down {
  position: absolute;
  right: 3px;
  border: 8px solid transparent;
}

.scroll-up {
  top: 69px;
  border-bottom: 10px solid #c4c4c4;
  border-top: 0;
}

.scroll-down {
  top: 842px;
  border-top: 10px solid #c4c4c4;
  border-bottom: 0;
}

.annot {
  position: absolute;
  top: -1px;
  left: -3px;
  right: -3px;
  height: 511px;
  box-sizing: border-box;
  border: 4px solid #f44a22;
  border-radius: 8px;
  pointer-events: none;
}

.gridbar {
  flex: none;
  box-sizing: border-box;
  height: 71px;
  display: flex;
  gap: 1px;
  padding: 2px 0 0 3px;
  border-top: 2px solid #c8c8c8;
}

.gbtn {
  flex: none;
  box-sizing: border-box;
  width: 70px;
  height: 67px;
  display: flex;
  align-items: center;
  justify-content: center;
  border: 2px solid #e8e8e8;
}

.gbtn-w {
  width: 69.5px;
}

.hscroll {
  flex: none;
  width: 996px;
  height: 16px;
  margin: 32px 0 0 28px;
  display: flex;
  align-items: center;
}

.arrow-l {
  border: 8px solid transparent;
  border-right: 8px solid #0077be;
  border-left: 0;
}

.thumb {
  width: 49px;
  height: 16px;
  background: #0077be;
}

.arrow-r {
  margin-left: auto;
  border: 8px solid transparent;
  border-left: 8px solid #0077be;
  border-right: 0;
}

.pager {
  display: flex;
  gap: 21px;
  margin: 33px 0 0 41px;
  line-height: 30px;
  color: #666;
}

.rail {
  flex: none;
  width: 52px;
  background: #f0f0f0;
  font-family: "Liberation Sans", sans-serif;
  font-size: 23.500px;
  color: #1a1a1a;
}

.rail-tab {
  box-sizing: border-box;
  width: 52px;
  padding: 3px 15px 0 0;
  writing-mode: vertical-rl;
  line-height: 26px;
  white-space: nowrap;
  border-right: 6px solid #c8c8c8;
}

.r1 {
  height: 217px;
  margin-top: 5px;
}

.r2 {
  height: 139px;
  margin-top: 20px;
}

.r3 {
  height: 118px;
  margin-top: 20px;
}

.status {
  flex: none;
  height: 40px;
  padding-left: 6px;
  font-family: "Open Sans", sans-serif;
  font-size: 21.500px;
  line-height: 44px;
}
</style>
